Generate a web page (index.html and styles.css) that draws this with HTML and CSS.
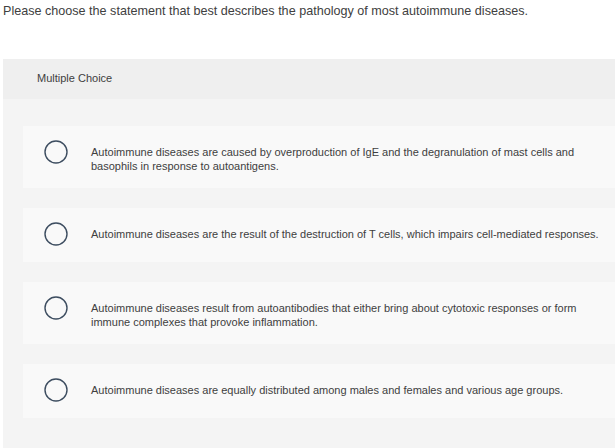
FILE: index.html
```html
<!DOCTYPE html>
<html>
<head>
<meta charset="utf-8">
<link rel="stylesheet" href="styles.css">
</head>
<body>
<p class="question">Please choose the statement that best describes the pathology of most autoimmune diseases.</p>
<section class="panel">
  <div class="panel-header">Multiple Choice</div>
  <div class="options">
    <div class="option">
      <svg class="radio" width="24" height="24" viewBox="0 0 24 24"><circle cx="12" cy="12" r="11" fill="none" stroke="#3d4d60" stroke-width="1.4"/></svg>
      <div class="option-text">Autoimmune diseases are caused by overproduction of IgE and the degranulation of mast cells and basophils in response to autoantigens.</div>
    </div>
    <div class="option">
      <svg class="radio" width="24" height="24" viewBox="0 0 24 24"><circle cx="12" cy="12" r="11" fill="none" stroke="#3d4d60" stroke-width="1.4"/></svg>
      <div class="option-text">Autoimmune diseases are the result of the destruction of T cells, which impairs cell-mediated responses.</div>
    </div>
    <div class="option">
      <svg class="radio" width="24" height="24" viewBox="0 0 24 24"><circle cx="12" cy="12" r="11" fill="none" stroke="#3d4d60" stroke-width="1.4"/></svg>
      <div class="option-text">Autoimmune diseases result from autoantibodies that either bring about cytotoxic responses or form immune complexes that provoke inflammation.</div>
    </div>
    <div class="option">
      <svg class="radio" width="24" height="24" viewBox="0 0 24 24"><circle cx="12" cy="12" r="11" fill="none" stroke="#3d4d60" stroke-width="1.4"/></svg>
      <div class="option-text">Autoimmune diseases are equally distributed among males and females and various age groups.</div>
    </div>
  </div>
</section>
</body>
</html>
```

FILE: styles.css
```css
html, body {
  margin: 0;
  padding: 0;
  background: #ffffff;
  font-family: "Liberation Sans", Arial, sans-serif;
  color: #404040;
}

.question {
  margin: 0;
  padding: 3px 0 0 3px;
  font-size: 12.6px;
  line-height: 16px;
  height: 59px;
  box-sizing: border-box;
}

.panel {
  margin-left: 3px;
  background: #f4f4f4;
  min-height: 400px;
}

.panel-header {
  background: #efefef;
  height: 40px;
  padding-left: 34px;
  font-size: 11px;
  line-height: 39px;
  color: #404040;
}

.options {
  padding: 27px 0 20px 20px;
  display: flex;
  flex-direction: column;
  gap: 20px;
}

.option {
  background: #f9f9f9;
  display: flex;
  align-items: flex-start;
  padding: 14px 10px 15px 21px;
}

.radio {
  flex: none;
  display: block;
  margin-bottom: 1px;
}

.option-text {
  margin-left: 23px;
  padding-top: 5px;
  font-size: 11px;
  line-height: 14px;
  color: #404040;
}
```
